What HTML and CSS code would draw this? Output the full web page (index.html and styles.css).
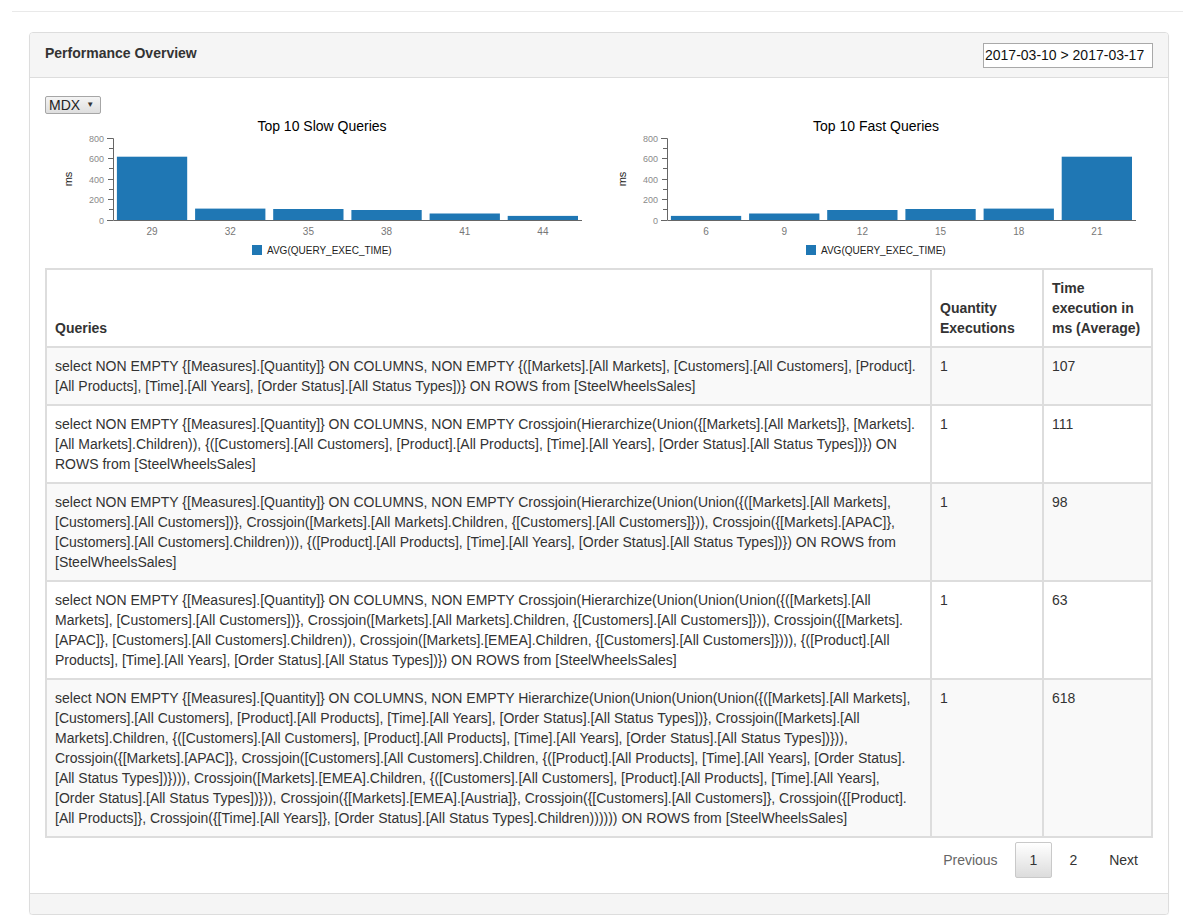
FILE: index.html
```html
<!DOCTYPE html>
<html lang="en">
<head>
<meta charset="utf-8">
<title>Performance Overview</title>
<link rel="stylesheet" href="styles.css">
</head>
<body>
<div class="topbar"></div>
<div class="page">
  <div class="panel">
    <div class="panel-heading">
      <h3 class="panel-title">Performance Overview</h3>
      <div class="date-range">2017-03-10 &gt; 2017-03-17</div>
    </div>
    <div class="panel-body">
      <div class="toolbar">
        <div class="select">MDX <span class="caret">&#9660;</span></div>
      </div>
      <div class="charts">
        <div class="chart">
          <svg class="chart-svg" width="554" height="153" viewBox="0 0 554 153">
            <text class="chart-title" x="277" y="16">Top 10 Slow Queries</text>
            <g class="bars">
              <rect x="71.9" y="41.7" width="70.3" height="63.3"/>
              <rect x="150.1" y="93.6" width="70.3" height="11.4"/>
              <rect x="228.2" y="94.0" width="70.3" height="11.0"/>
              <rect x="306.4" y="95.0" width="70.3" height="10.0"/>
              <rect x="384.6" y="98.5" width="70.3" height="6.5"/>
              <rect x="462.7" y="100.9" width="70.3" height="4.1"/>
            </g>
            <path class="axis" d="M62,23.5H68.5V105.5H537"/>
            <path class="axis" d="M64,33.5H68 M63,43.5H68 M64,53.5H68 M63,64.5H68 M64,74.5H68 M63,84.5H68 M64,94.5H68 M62,105.5H68"/>
            <g class="tick-y">
              <text x="59" y="27">800</text>
              <text x="59" y="47">600</text>
              <text x="59" y="68">400</text>
              <text x="59" y="88">200</text>
              <text x="59" y="109">0</text>
            </g>
            <text class="axis-label" transform="translate(27,64) rotate(-90)">ms</text>
            <g class="tick-x">
              <text x="107.1" y="120">29</text>
              <text x="185.3" y="120">32</text>
              <text x="263.4" y="120">35</text>
              <text x="341.6" y="120">38</text>
              <text x="419.8" y="120">41</text>
              <text x="497.9" y="120">44</text>
            </g>
            <rect class="legend-swatch" x="207" y="130" width="10" height="10"/>
            <text class="legend-text" x="222" y="139">AVG(QUERY_EXEC_TIME)</text>
          </svg>
        </div>
        <div class="chart">
          <svg class="chart-svg" width="554" height="153" viewBox="0 0 554 153">
            <text class="chart-title" x="277" y="16">Top 10 Fast Queries</text>
            <g class="bars">
              <rect x="71.9" y="100.9" width="70.3" height="4.1"/>
              <rect x="150.1" y="98.5" width="70.3" height="6.5"/>
              <rect x="228.2" y="95.0" width="70.3" height="10.0"/>
              <rect x="306.4" y="94.0" width="70.3" height="11.0"/>
              <rect x="384.6" y="93.6" width="70.3" height="11.4"/>
              <rect x="462.7" y="41.7" width="70.3" height="63.3"/>
            </g>
            <path class="axis" d="M62,23.5H68.5V105.5H537"/>
            <path class="axis" d="M64,33.5H68 M63,43.5H68 M64,53.5H68 M63,64.5H68 M64,74.5H68 M63,84.5H68 M64,94.5H68 M62,105.5H68"/>
            <g class="tick-y">
              <text x="59" y="27">800</text>
              <text x="59" y="47">600</text>
              <text x="59" y="68">400</text>
              <text x="59" y="88">200</text>
              <text x="59" y="109">0</text>
            </g>
            <text class="axis-label" transform="translate(27,64) rotate(-90)">ms</text>
            <g class="tick-x">
              <text x="107.1" y="120">6</text>
              <text x="185.3" y="120">9</text>
              <text x="263.4" y="120">12</text>
              <text x="341.6" y="120">15</text>
              <text x="419.8" y="120">18</text>
              <text x="497.9" y="120">21</text>
            </g>
            <rect class="legend-swatch" x="207" y="130" width="10" height="10"/>
            <text class="legend-text" x="222" y="139">AVG(QUERY_EXEC_TIME)</text>
          </svg>
        </div>
      </div>
      <table class="queries">
        <colgroup>
          <col class="col-query">
          <col class="col-qty">
          <col class="col-time">
        </colgroup>
        <thead>
          <tr>
            <th>Queries</th>
            <th>Quantity Executions</th>
            <th>Time execution in ms (Average)</th>
          </tr>
        </thead>
        <tbody>
          <tr>
            <td>select NON EMPTY {[Measures].[Quantity]} ON COLUMNS, NON EMPTY {([Markets].[All Markets], [Customers].[All Customers], [Product].[All Products], [Time].[All Years], [Order Status].[All Status Types])} ON ROWS from [SteelWheelsSales]</td>
            <td>1</td>
            <td>107</td>
          </tr>
          <tr>
            <td>select NON EMPTY {[Measures].[Quantity]} ON COLUMNS, NON EMPTY Crossjoin(Hierarchize(Union({[Markets].[All Markets]}, [Markets].[All Markets].Children)), {([Customers].[All Customers], [Product].[All Products], [Time].[All Years], [Order Status].[All Status Types])}) ON ROWS from [SteelWheelsSales]</td>
            <td>1</td>
            <td>111</td>
          </tr>
          <tr>
            <td>select NON EMPTY {[Measures].[Quantity]} ON COLUMNS, NON EMPTY Crossjoin(Hierarchize(Union(Union({([Markets].[All Markets], [Customers].[All Customers])}, Crossjoin([Markets].[All Markets].Children, {[Customers].[All Customers]})), Crossjoin({[Markets].[APAC]}, [Customers].[All Customers].Children))), {([Product].[All Products], [Time].[All Years], [Order Status].[All Status Types])}) ON ROWS from [SteelWheelsSales]</td>
            <td>1</td>
            <td>98</td>
          </tr>
          <tr>
            <td>select NON EMPTY {[Measures].[Quantity]} ON COLUMNS, NON EMPTY Crossjoin(Hierarchize(Union(Union(Union({([Markets].[All Markets], [Customers].[All Customers])}, Crossjoin([Markets].[All Markets].Children, {[Customers].[All Customers]})), Crossjoin({[Markets].[APAC]}, [Customers].[All Customers].Children)), Crossjoin([Markets].[EMEA].Children, {[Customers].[All Customers]}))), {([Product].[All Products], [Time].[All Years], [Order Status].[All Status Types])}) ON ROWS from [SteelWheelsSales]</td>
            <td>1</td>
            <td>63</td>
          </tr>
          <tr>
            <td>select NON EMPTY {[Measures].[Quantity]} ON COLUMNS, NON EMPTY Hierarchize(Union(Union(Union(Union({([Markets].[All Markets], [Customers].[All Customers], [Product].[All Products], [Time].[All Years], [Order Status].[All Status Types])}, Crossjoin([Markets].[All Markets].Children, {([Customers].[All Customers], [Product].[All Products], [Time].[All Years], [Order Status].[All Status Types])})), Crossjoin({[Markets].[APAC]}, Crossjoin([Customers].[All Customers].Children, {([Product].[All Products], [Time].[All Years], [Order Status].[All Status Types])}))), Crossjoin([Markets].[EMEA].Children, {([Customers].[All Customers], [Product].[All Products], [Time].[All Years], [Order Status].[All Status Types])})), Crossjoin({[Markets].[EMEA].[Austria]}, Crossjoin({[Customers].[All Customers]}, Crossjoin({[Product].[All Products]}, Crossjoin({[Time].[All Years]}, [Order Status].[All Status Types].Children)))))) ON ROWS from [SteelWheelsSales]</td>
            <td>1</td>
            <td>618</td>
          </tr>
        </tbody>
      </table>
      <div class="pager">
        <span class="page-btn disabled">Previous</span>
        <span class="page-btn current">1</span>
        <span class="page-btn">2</span>
        <span class="page-btn">Next</span>
      </div>
    </div>
    <div class="panel-footer"></div>
  </div>
</div>
</body>
</html>
```

FILE: styles.css
```css
* {
  box-sizing: border-box;
}

html, body {
  margin: 0;
  padding: 0;
  background: #ffffff;
}

body {
  font-family: "Liberation Sans", Arial, sans-serif;
  font-size: 14px;
  line-height: 20px;
  color: #333333;
}

.topbar {
  margin: 0 12px;
  height: 12px;
  border-bottom: 1px solid #e9e9e9;
}

.page {
  padding: 20px 26px 0 29px;
}

.panel {
  border: 1px solid #dddddd;
  border-radius: 4px;
  background: #ffffff;
  box-shadow: 0 1px 1px rgba(0, 0, 0, 0.05);
}

.panel-heading {
  display: flex;
  justify-content: space-between;
  align-items: flex-start;
  padding: 10px 15px 9px;
  background: #f5f5f5;
  border-bottom: 1px solid #dddddd;
  border-radius: 3px 3px 0 0;
}

.panel-title {
  margin: 0;
  font-size: 14px;
  line-height: 20px;
  font-weight: bold;
  color: #333333;
}

.date-range {
  width: 170px;
  height: 25px;
  padding: 0 1px;
  line-height: 23px;
  border: 1px solid #a9a9a9;
  background: #ffffff;
  color: #111111;
  font-size: 14px;
  white-space: nowrap;
}

.panel-body {
  padding: 15px;
}

.toolbar {
  padding-top: 2px;
  height: 20px;
}

.select {
  display: inline-flex;
  align-items: center;
  gap: 6px;
  height: 18px;
  width: 56px;
  padding: 0 4px 0 3px;
  border: 1px solid #a6a6a6;
  border-radius: 2px;
  background: linear-gradient(#f4f4f4, #dedede);
  color: #222222;
  font-size: 14px;
  line-height: 16px;
}

.caret {
  font-size: 8px;
  line-height: 16px;
  color: #333333;
}

.charts {
  display: flex;
  margin-top: 2px;
  height: 153px;
}

.chart {
  flex: 1 1 0;
}

.chart-svg {
  display: block;
  font-family: "Liberation Sans", Arial, sans-serif;
}

.chart-title {
  font-size: 14px;
  fill: #000000;
  text-anchor: middle;
}

.bars rect {
  fill: #1f77b4;
}

.axis {
  fill: none;
  stroke: #666666;
  stroke-width: 1;
}

.tick-y text {
  font-size: 9px;
  fill: #8a8a8a;
  text-anchor: end;
}

.tick-x text {
  font-size: 10px;
  fill: #777777;
  text-anchor: middle;
}

.axis-label {
  font-size: 11px;
  fill: #222222;
  text-anchor: middle;
}

.legend-swatch {
  fill: #1f77b4;
}

.legend-text {
  font-size: 10px;
  fill: #222222;
}

.queries {
  width: 100%;
  table-layout: fixed;
  border-collapse: separate;
  border-spacing: 0;
  border-top: 2px solid #dddddd;
  border-left: 2px solid #dddddd;
}

.col-qty {
  width: 112px;
}

.col-time {
  width: 109px;
}

.queries th,
.queries td {
  padding: 8px;
  border-right: 2px solid #dddddd;
  border-bottom: 2px solid #dddddd;
  text-align: left;
  line-height: 20px;
}

.queries th {
  vertical-align: bottom;
  font-weight: bold;
  color: #333333;
}

.queries td {
  vertical-align: top;
}

.queries tbody tr:nth-child(odd) td {
  background: #f9f9f9;
}

.pager {
  display: flex;
  justify-content: flex-end;
  margin-top: 4px;
}

.page-btn {
  margin-left: 2px;
  padding: 7px 14px;
  line-height: 20px;
  border: 1px solid transparent;
  border-radius: 2px;
  color: #333333;
}

.page-btn.disabled {
  color: #666666;
}

.page-btn.current {
  border-color: #c9c9c9;
  background: linear-gradient(#ffffff, #dcdcdc);
}

.panel-footer {
  height: 21px;
  background: #f5f5f5;
  border-top: 1px solid #dddddd;
  border-radius: 0 0 3px 3px;
}
```
